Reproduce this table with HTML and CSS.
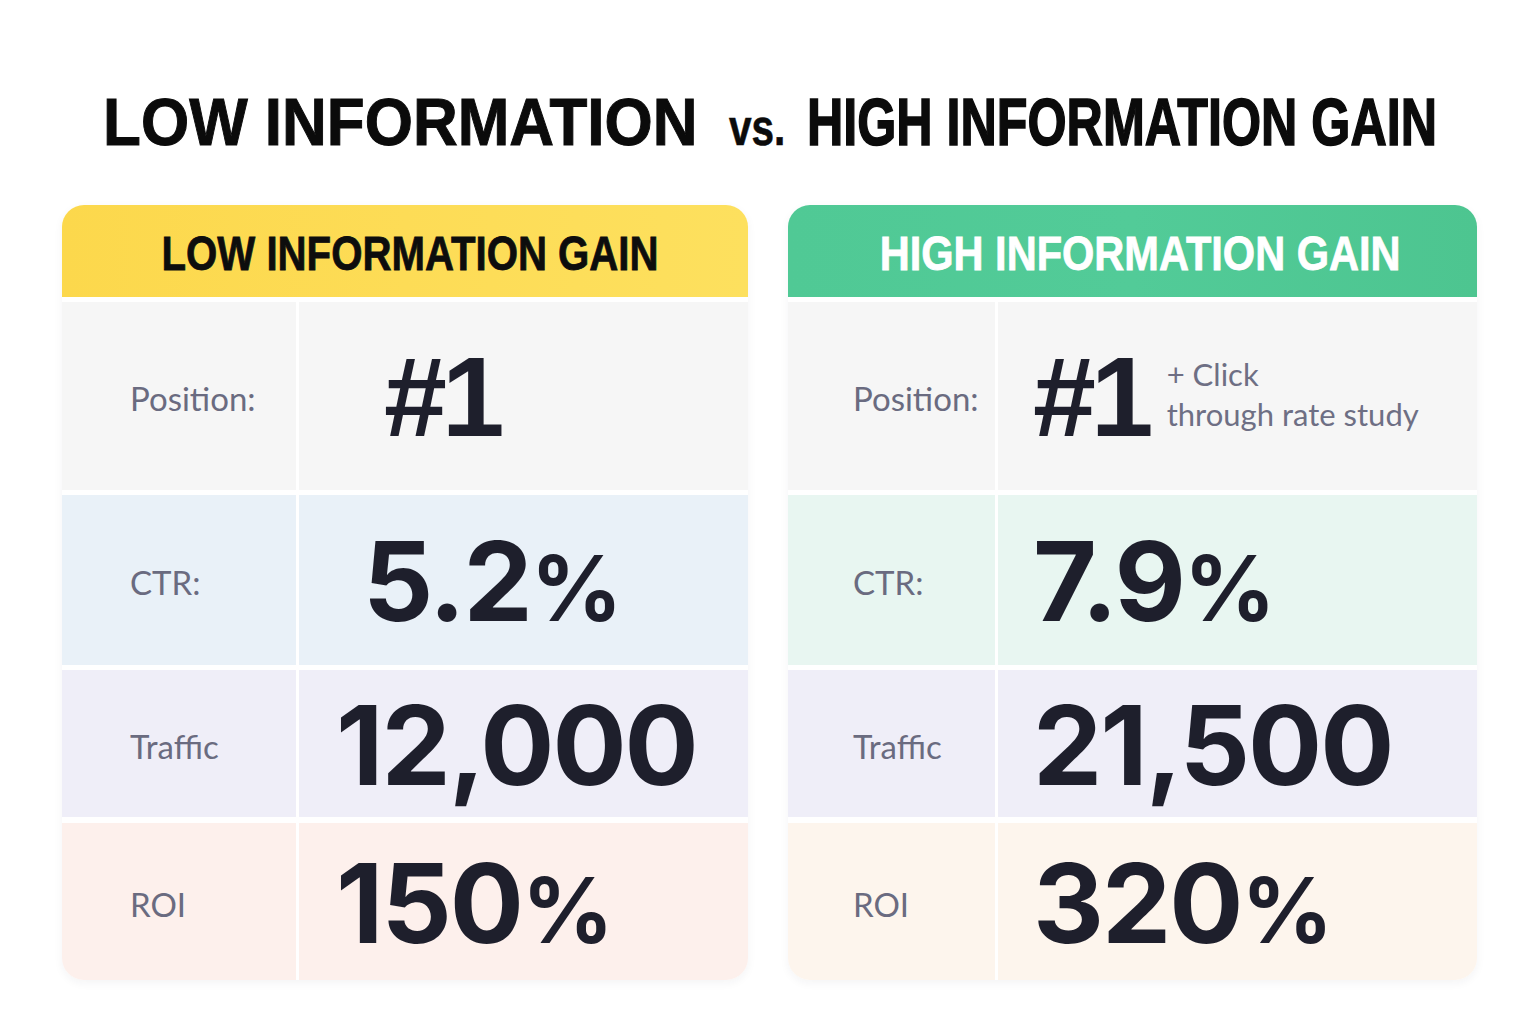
FILE: index.html
```html
<!DOCTYPE html>
<html lang="en">
<head>
<meta charset="utf-8">
<title>Low vs High Information Gain</title>
<link rel="stylesheet" href="styles.css">
</head>
<body>
<div class="page">
  <h1 class="title">
    <span class="t-low">LOW INFORMATION</span>
    <span class="t-vs">vs.</span>
    <span class="t-high">HIGH INFORMATION GAIN</span>
  </h1>

  <div class="cards">
    <section class="card card-low">
      <header class="card-head head-low"><span class="head-text head-text-low">LOW INFORMATION GAIN</span></header>
      <div class="row row-pos">
        <div class="label">Position:</div>
        <div class="value pad-pos-low"><span class="num num-rank">#1</span></div>
      </div>
      <div class="row row-ctr-low">
        <div class="label">CTR:</div>
        <div class="value pad-ctr-low"><span class="num">5.2<span class="pct">%</span></span></div>
      </div>
      <div class="row row-traffic">
        <div class="label">Traffic</div>
        <div class="value pad-wide-low"><span class="num">12,000</span></div>
      </div>
      <div class="row row-roi-low last">
        <div class="label">ROI</div>
        <div class="value pad-wide-low"><span class="num">150<span class="pct">%</span></span></div>
      </div>
    </section>

    <section class="card card-high">
      <header class="card-head head-high"><span class="head-text head-text-high">HIGH INFORMATION GAIN</span></header>
      <div class="row row-pos">
        <div class="label">Position:</div>
        <div class="value pad-high">
          <span class="num num-rank">#1</span>
          <span class="note">+ Click<br>through rate study</span>
        </div>
      </div>
      <div class="row row-ctr-high">
        <div class="label">CTR:</div>
        <div class="value pad-high"><span class="num">7.9<span class="pct">%</span></span></div>
      </div>
      <div class="row row-traffic">
        <div class="label">Traffic</div>
        <div class="value pad-high"><span class="num">21,500</span></div>
      </div>
      <div class="row row-roi-high last">
        <div class="label">ROI</div>
        <div class="value pad-high"><span class="num">320<span class="pct">%</span></span></div>
      </div>
    </section>
  </div>
</div>
</body>
</html>
```

FILE: styles.css
```css
* { box-sizing: border-box; }

html, body {
  margin: 0;
  padding: 0;
  background: #ffffff;
}

body {
  font-family: "Liberation Sans", Arial, sans-serif;
  width: 1536px;
  height: 1024px;
  overflow: hidden;
}

.page {
  padding-top: 82px;
}

/* ---------- Title ---------- */
.title {
  margin: 0;
  height: 80px;
  line-height: 80px;
  display: flex;
  justify-content: center;
  align-items: baseline;
  padding-left: 5px;
  font-weight: 700;
  color: #0b0b0b;
  white-space: nowrap;
}

.title span {
  display: inline-block;
  transform-origin: center;
}

.t-low {
  font-size: 67px;
  transform: scaleX(0.925);
  -webkit-text-stroke: 1px #0b0b0b;
  margin: 0 -3px 0 -28px;
}

.t-vs {
  font-size: 52px;
  transform: scaleX(0.78);
  -webkit-text-stroke: 0.6px #0b0b0b;
  margin: 0 -8px 0 2px;
}

.t-high {
  font-size: 67px;
  transform: scaleX(0.75);
  -webkit-text-stroke: 1.6px #0b0b0b;
  margin: 0 -108px 0 -83px;
}

/* ---------- Cards ---------- */
.cards {
  margin-top: 43px;
  display: grid;
  grid-template-columns: 686px 689px;
  column-gap: 40px;
  padding-left: 62px;
}

.card {
  display: flex;
  flex-direction: column;
  gap: 5px;
  background: #ffffff;
  border-radius: 22px;
  box-shadow: 0 3px 10px rgba(40, 40, 60, 0.05);
}

.card-head {
  height: 92px;
  border-radius: 22px 22px 0 0;
  display: flex;
  align-items: center;
  justify-content: center;
  padding-top: 4px;
}

.head-low {
  background: linear-gradient(90deg, #fcd84c 0%, #fddc56 50%, #fde05e 100%);
}

.head-high {
  background: linear-gradient(90deg, #50c995 0%, #52cb98 50%, #4dc590 100%);
}

.head-text {
  display: inline-block;
  font-size: 49px;
  font-weight: 700;
  white-space: nowrap;
  transform-origin: center;
}

.head-text-low {
  color: #0d0d0d;
  -webkit-text-stroke: 0.8px #0d0d0d;
  transform: scaleX(0.82);
  margin-left: 10px;
}

.head-text-high {
  color: #ffffff;
  -webkit-text-stroke: 0.8px #ffffff;
  transform: scaleX(0.848);
  margin-left: 16px;
}

/* ---------- Rows ---------- */
.row {
  display: grid;
  column-gap: 3px;
}

.card-low .row { grid-template-columns: 234px 1fr; }
.card-high .row { grid-template-columns: 207px 1fr; }

.row-pos { height: 188px; }
.row-ctr-low, .row-ctr-high { height: 170px; }
.row-traffic { height: 147px; margin-bottom: 1px; }
.row-roi-low, .row-roi-high { height: 157px; }

.row > div {
  display: flex;
  align-items: center;
}

.row-pos > div { background: #f6f6f6; }
.row-ctr-low > div { background: #e9f1f8; }
.row-ctr-high > div { background: #e8f6f1; }
.row-traffic > div { background: #efeef8; }
.row-roi-low > div { background: #fdf0ec; }
.row-roi-high > div { background: #fdf5ed; }

.last .label { border-bottom-left-radius: 22px; }
.last .value { border-bottom-right-radius: 22px; }

.label {
  font-family: Lato, "Open Sans", sans-serif;
  font-size: 33px;
  color: #6a6b80;
  padding-top: 4px;
}

.card-low .label { padding-left: 68px; }
.card-high .label { padding-left: 65px; }

.value {
  padding-top: 2px;
}

.num {
  font-family: Inter, "Liberation Sans", Arial, sans-serif;
  font-weight: 700;
  font-size: 110px;
  letter-spacing: -2px;
  line-height: 1;
  color: #1e1f2c;
}

.num-rank {
  font-family: "Liberation Sans", Arial, sans-serif;
  font-weight: 700;
  font-size: 113px;
  letter-spacing: -5px;
}

.pct {
  font-size: 0.82em;
  letter-spacing: 0;
  margin-left: 0;
}

.pad-pos-low { padding-left: 85px; }
.pad-ctr-low { padding-left: 64px; }
.pad-wide-low { padding-left: 37px; }
.pad-high { padding-left: 35px; }

.note {
  font-family: Lato, "Open Sans", sans-serif;
  font-size: 31px;
  line-height: 40px;
  color: #6e6f84;
  margin-left: 18px;
  margin-bottom: 6px;
}
```
